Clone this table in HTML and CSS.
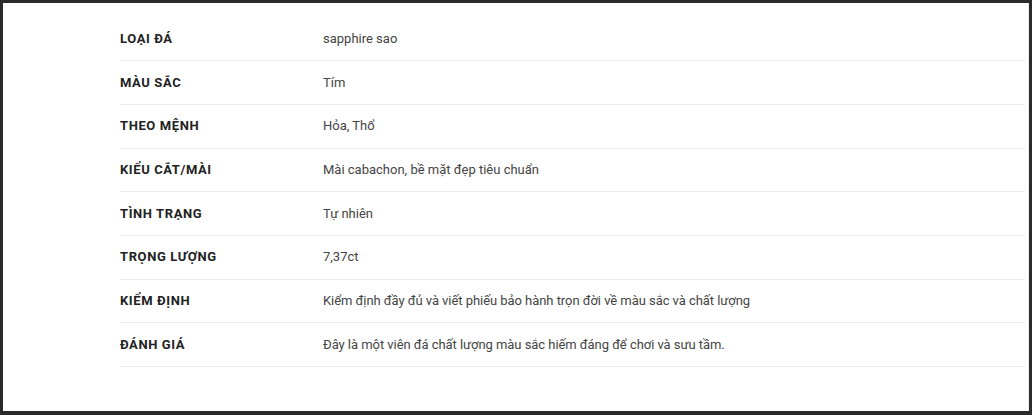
FILE: index.html
```html
<!DOCTYPE html>
<html lang="vi">
<head>
  <meta charset="UTF-8">
  <meta name="viewport" content="width=device-width, initial-scale=1.0">
  <link rel="stylesheet" href="styles.css">
  <title>Thông số đá</title>
</head>
<body>
  <div class="frame">
    <table class="specs">
      <tr><th>Loại đá</th><td>sapphire sao</td></tr>
      <tr><th>Màu sắc</th><td>Tím</td></tr>
      <tr><th>Theo mệnh</th><td>Hỏa, Thổ</td></tr>
      <tr><th>Kiểu cắt/mài</th><td>Mài cabachon, bề mặt đẹp tiêu chuẩn</td></tr>
      <tr><th>Tình trạng</th><td>Tự nhiên</td></tr>
      <tr><th>Trọng lượng</th><td>7,37ct</td></tr>
      <tr><th>Kiểm định</th><td class="narrow">Kiểm định đầy đủ và viết phiếu bảo hành trọn đời về màu sắc và chất lượng</td></tr>
      <tr><th>Đánh giá</th><td class="narrow">Đây là một viên đá chất lượng màu sắc hiếm đáng để chơi và sưu tầm.</td></tr>
    </table>
  </div>
</body>
</html>
```

FILE: styles.css
```css
* {
  margin: 0;
  padding: 0;
  box-sizing: border-box;
}

html, body {
  height: 100%;
}

body {
  background-color: #2a2a2a;
  font-family: Roboto, "Liberation Sans", sans-serif;
  padding: 3px 3px 4px 3px;
}

.frame {
  background-color: #fff;
  height: 100%;
  padding: 14px 3px 0 117px;
  border-right: 1px solid #ececec;
}

.specs {
  width: 100%;
  border-collapse: collapse;
}

.specs tr {
  border-bottom: 1px solid #ececec;
}

.specs th,
.specs td {
  height: 43.7px;
  text-align: left;
  vertical-align: middle;
  line-height: 20px;
}

.specs th {
  width: 203px;
  font-size: 13px;
  font-weight: 700;
  letter-spacing: 0.6px;
  text-transform: uppercase;
  color: #222;
}

.specs td {
  font-size: 13px;
  color: #444;
}

.specs td.narrow {
  letter-spacing: -0.05px;
}
```
